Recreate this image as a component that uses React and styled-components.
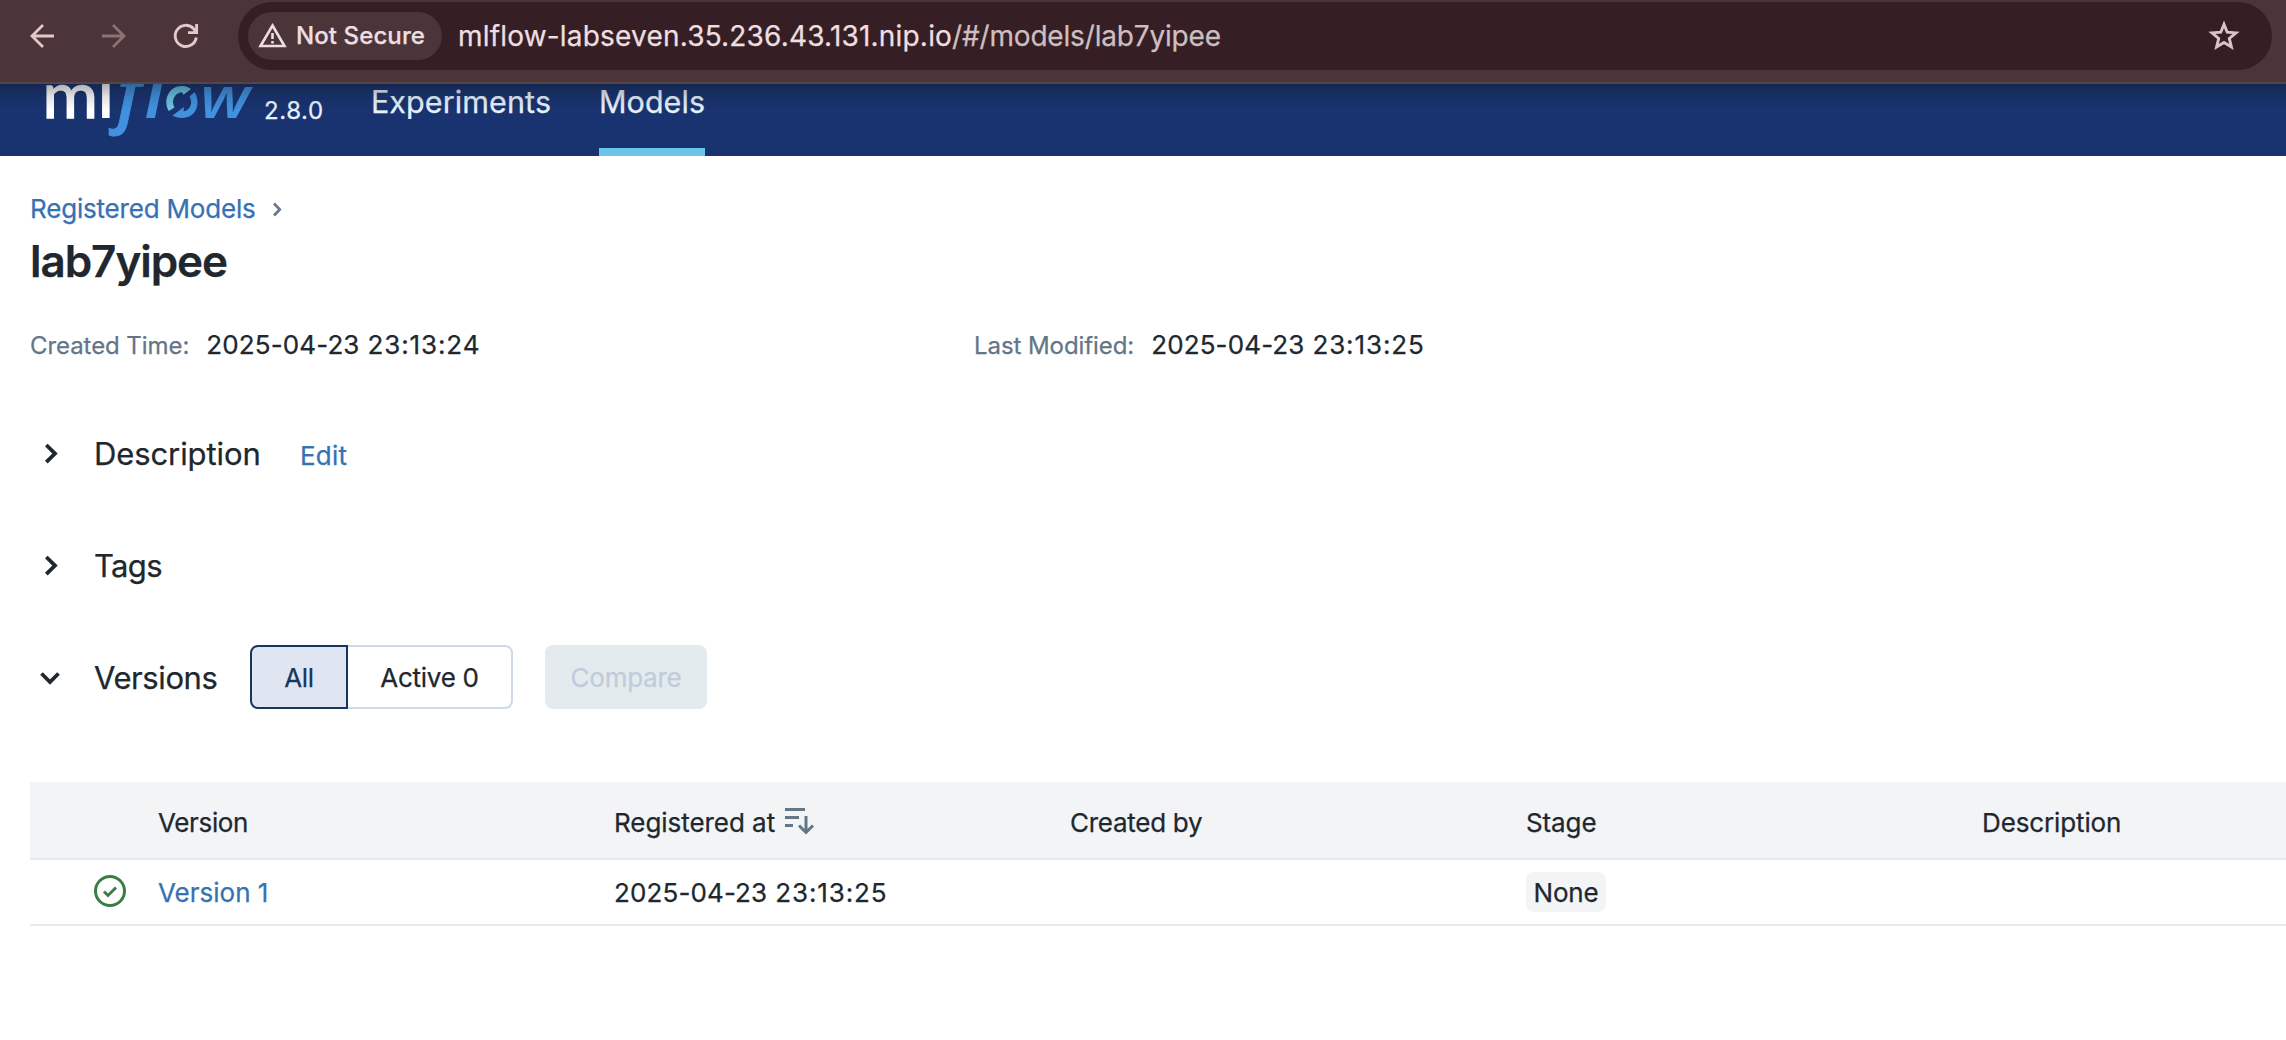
import React from "react";
import styled, { createGlobalStyle } from "styled-components";

const GlobalStyle = createGlobalStyle`
  *, *::before, *::after { box-sizing: border-box; }
  html, body { margin: 0; padding: 0; background: #fff; }
  body {
    overflow: hidden;
    font-family: Inter, "Liberation Sans", sans-serif;
    font-size: 26px;
    color: #20272e;
    -webkit-text-stroke: 0.25px;
  }
  svg { -webkit-text-stroke: 0; }
`;

const Page = styled.div`
  width: 100%;
  height: 1040px;
  overflow: hidden;
  display: flex;
  flex-direction: column;
`;

const Text = styled.span`
  white-space: nowrap;
  letter-spacing: ${(p) => p.$ls || 0}px;
`;

const DateTime = styled.span`
  white-space: nowrap;
  letter-spacing: 0.12px;
  word-spacing: 0.5px;
`;

const Time = styled.span`
  letter-spacing: 0.88px;
`;

/* Browser toolbar */
const Toolbar = styled.div`
  flex: none;
  height: 84px;
  padding: 2px 14px 0 30px;
  display: flex;
  align-items: flex-start;
  background: #4b3538;
  border-bottom: 2px solid #574446;
`;

const NavButtons = styled.div`
  width: 208px;
  height: 68px;
  display: flex;
  align-items: center;
  gap: 48px;
`;

const Omnibox = styled.div`
  flex: 1;
  height: 68px;
  padding: 0 32px 0 10px;
  border-radius: 34px;
  display: flex;
  align-items: center;
  background: #351f24;
`;

const SecurityChip = styled.div`
  width: 194px;
  height: 48px;
  padding: 0 0 1px 10px;
  border-radius: 24px;
  display: flex;
  align-items: center;
  gap: 9px;
  background: #4b3538;
  color: #eddfe0;
  font-size: 24px;
  font-weight: 500;
`;

const Url = styled.div`
  flex: 1;
  margin: -1px 0 0 16px;
  font-size: 28px;
  letter-spacing: -0.18px;
  white-space: nowrap;
  color: #cdbfc1;
`;

const Host = styled.span`
  letter-spacing: 0.19px;
  color: #eddfe0;
`;

/* MLflow header */
const Header = styled.header`
  position: relative;
  flex: none;
  height: 72px;
  padding-left: 40px;
  display: flex;
  align-items: stretch;
  overflow: hidden;
  background: #18336f;
  &::after {
    content: "";
    position: absolute;
    inset: 0 0 auto 0;
    height: 26px;
    background: linear-gradient(rgba(15, 20, 30, 0.34), rgba(15, 20, 30, 0.12) 50%, rgba(15, 20, 30, 0));
  }
`;

const VersionLabel = styled.div`
  width: 107px;
  padding-top: 12px;
  font-size: 24px;
  line-height: 30px;
  letter-spacing: 0.6px;
  color: #e7f1fb;
`;

const Tabs = styled.nav`
  display: flex;
  gap: 48px;
`;

const Tab = styled.a`
  width: ${(p) => p.$w}px;
  display: flex;
  justify-content: center;
  white-space: nowrap;
  font-size: 30.5px;
  line-height: 36px;
  letter-spacing: ${(p) => p.$ls}px;
  color: #e7f1fb;
  border-bottom: 8px solid ${(p) => (p.$active ? "#6bc5e9" : "transparent")};
`;

/* Model page */
const Main = styled.main`
  flex: 1;
  min-width: 0;
  padding: 32px 0 0 30px;
`;

const Breadcrumb = styled.div`
  height: 40px;
  display: flex;
  align-items: center;
  gap: 17px;
`;

const Link = styled.a`
  color: #3671b3;
  white-space: nowrap;
  letter-spacing: ${(p) => p.$ls || 0}px;
`;

const Title = styled.h1`
  margin: 5px 0 36px 0;
  font-size: 44px;
  line-height: 56px;
  font-weight: 600;
  letter-spacing: -1.05px;
`;

const Metadata = styled.div`
  height: 40px;
  display: grid;
  grid-template-columns: 944px 1fr;
`;

const MetaItem = styled.div`
  display: flex;
  align-items: baseline;
  gap: 17px;
  line-height: 40px;
`;

const MetaLabel = styled.span`
  font-size: 24px;
  letter-spacing: -0.07px;
  color: #647587;
`;

const Section = styled.section`
  height: ${(p) => p.$h || 44}px;
  margin-top: ${(p) => p.$mt}px;
  padding-left: 10px;
  display: flex;
  align-items: center;
`;

const SectionHead = styled.div`
  display: flex;
  align-items: baseline;
`;

const SectionTitle = styled.h2`
  width: ${(p) => p.$w}px;
  margin: 0 0 0 32px;
  padding-top: ${(p) => p.$pt || 0}px;
  font-size: 31px;
  line-height: 44px;
  font-weight: 400;
  white-space: nowrap;
  letter-spacing: ${(p) => p.$ls}px;
`;

const ButtonGroup = styled.div`
  display: flex;
`;

const Button = styled.button`
  width: ${(p) => p.$w}px;
  height: 64px;
  padding: 0;
  font: inherit;
  letter-spacing: -0.27px;
  border: 2px solid #cfdae5;
  border-radius: 8px;
  background: #fff;
  color: #20272e;
`;

const AllButton = styled(Button)`
  border-color: #15365f;
  border-radius: 8px 0 0 8px;
  background: #dfe6f1;
  color: #15365f;
`;

const ActiveButton = styled(Button)`
  border-left: 0;
  border-radius: 0 8px 8px 0;
`;

const CompareButton = styled(Button)`
  margin-left: 32px;
  border-color: #e4ebee;
  background: #e4ebee;
  color: #c0ccdb;
`;

const Table = styled.div`
  margin-top: 73px;
`;

const Row = styled.div`
  height: ${(p) => p.$h}px;
  padding-left: 64px;
  display: grid;
  grid-template-columns: 64px repeat(5, 456px);
  align-items: center;
  white-space: nowrap;
  border-bottom: 2px solid #e4ecee;
`;

const HeadRow = styled(Row)`
  padding-top: 5px;
  background: #f3f4f6;
`;

const Cell = styled.div`
  display: flex;
  align-items: center;
  letter-spacing: ${(p) => p.$ls || 0}px;
`;

const StageTag = styled.span`
  width: 80px;
  height: 40px;
  display: flex;
  align-items: center;
  justify-content: center;
  border-radius: 8px;
  background: #f3f4f6;
`;

const Icon = styled.svg`
  display: block;
  flex: none;
  overflow: visible;
  fill: none;
  stroke: currentColor;
  color: ${(p) => p.$color || "#20272e"};
`;

const SortIcon = styled(Icon)`
  margin: -3px 0 0 10px;
`;

const LogoSvg = styled.svg`
  flex: none;
  display: block;
  margin-right: 4px;
`;

function Logo() {
  return (
    <LogoSvg width="220" height="60" viewBox="0 0 220 60">
      <g fill="#fff" fontFamily="Lato, sans-serif" fontSize="61">
        <text x="2.500" y="33.500" stroke="#fff" strokeWidth="1.300" textLength="55.500" lengthAdjust="spacingAndGlyphs">m</text>
        <text x="58.300" y="34" fontWeight="700">l</text>
      </g>
      <g fill="#4191df" fontFamily='"Open Sans", sans-serif' fontStyle="italic" fontWeight="600">
        <text x="77" y="35" fontSize="72" stroke="#4191df" strokeWidth="0.800">f</text>
        <text x="105" y="34" fontSize="60" fontWeight="700">l</text>
        <text x="160" y="34" fontSize="57" textLength="50" lengthAdjust="spacingAndGlyphs">w</text>
      </g>
      <path d="M128.800 27 C122.500 16 129 2 142 2 C146 2 149.500 3.500 151 5 L143.500 10.800 L142 8.200 C134 9 131 17 134.500 23.500 Z" fill="#69c3e3" />
      <path d="M154.500 8 C161 18 157 34 142 34 C138 34 135 33 132.500 31.500 L144 23 L143.500 27.500 C151 26 153 18 149.500 12.500 Z" fill="#4191df" />
    </LogoSvg>
  );
}

function Chevron({ down }) {
  return (
    <Icon width="22" height="22" viewBox="0 0 22 22" strokeWidth="3.8">
      <path d={down ? "M1.500 7.500 L10 16 L18.500 7.500" : "M6.300 2 L15 10.600 L6.300 19.200"} />
    </Icon>
  );
}

function Timestamp({ date, time }) {
  return (
    <DateTime>
      {date} <Time>{time}</Time>
    </DateTime>
  );
}

export default function App() {
  return (
    <Page>
      <GlobalStyle />
      <Toolbar>
        <NavButtons>
          <Icon width="24" height="24" viewBox="0 0 24 24" $color="#e5c6ca" strokeWidth="2.800">
            <path d="M24 12 H2 M13 1 L2 12 L13 23" />
          </Icon>
          <Icon width="24" height="24" viewBox="0 0 24 24" $color="#8b7376" strokeWidth="2.800">
            <path d="M0 12 H22 M11 1 L22 12 L11 23" />
          </Icon>
          <Icon width="24" height="24" viewBox="0 0 24 24" $color="#e5c6ca" strokeWidth="2.900">
            <path d="M22.300 13.500 A10.600 10.600 0 1 1 19.500 4.600 L22.500 8.500 M22.600 0 V8.600 H14" />
          </Icon>
        </NavButtons>
        <Omnibox>
          <SecurityChip>
            <Icon width="29" height="25" viewBox="0 0 29 25" strokeWidth="2.600" $color="#eddfe0">
              <path d="M14.500 2.500 L26.500 23 H2.500 Z M14.500 10 V16 M14.500 18 V20.500" />
            </Icon>
            <Text $ls={0.1}>Not Secure</Text>
          </SecurityChip>
          <Url>
            <Host>mlflow-labseven.35.236.43.131.nip.io</Host>/#/models/lab7yipee
          </Url>
          <Icon width="31" height="30" viewBox="0 0 31 30" strokeWidth="2.900" $color="#d6c6c8">
            <path d="M15 3.300 L18.200 11.200 L27 11.900 L20.300 17.500 L22.400 26 L15 21.500 L7.600 26 L9.700 17.500 L3 11.900 L11.800 11.200 Z" />
          </Icon>
        </Omnibox>
      </Toolbar>

      <Header>
        <Logo />
        <VersionLabel>2.8.0</VersionLabel>
        <Tabs>
          <Tab $w={180} $ls={0.1}>Experiments</Tab>
          <Tab $w={106} $ls={0.05} $active>Models</Tab>
        </Tabs>
      </Header>

      <Main>
        <Breadcrumb>
          <Link $ls={-0.19}>Registered Models</Link>
          <Icon width="12" height="14" viewBox="0 0 12 14" strokeWidth="2.600" $color="#647587">
            <path d="M1 2.500 L6.800 8.500 L1 14.500" />
          </Icon>
        </Breadcrumb>
        <Title>lab7yipee</Title>
        <Metadata>
          <MetaItem>
            <MetaLabel>Created Time:</MetaLabel>
            <Timestamp date="2025-04-23" time="23:13:24" />
          </MetaItem>
          <MetaItem>
            <MetaLabel>Last Modified:</MetaLabel>
            <Timestamp date="2025-04-23" time="23:13:25" />
          </MetaItem>
        </Metadata>

        <Section $mt={67}>
          <Chevron />
          <SectionHead>
            <SectionTitle $w={206} $ls={-0.1}>Description</SectionTitle>
            <Link $ls={0.2}>Edit</Link>
          </SectionHead>
        </Section>
        <Section $mt={68}>
          <Chevron />
          <SectionTitle $ls={-0.65}>Tags</SectionTitle>
        </Section>
        <Section $mt={57} $h={64}>
          <Chevron down />
          <SectionTitle $w={156} $ls={-0.4} $pt={2}>Versions</SectionTitle>
          <ButtonGroup>
            <AllButton $w={98}>All</AllButton>
            <ActiveButton $w={165}>Active 0</ActiveButton>
          </ButtonGroup>
          <CompareButton $w={162} disabled>Compare</CompareButton>
        </Section>

        <Table>
          <HeadRow $h={78}>
            <Cell />
            <Cell $ls={-0.35}>Version</Cell>
            <Cell $ls={-0.05}>
              Registered at
              <SortIcon width="29" height="27" viewBox="0 0 29 27" strokeWidth="3" $color="#647587">
                <path d="M0 1.500 H20 M0 9.500 H14 M0 17.500 H8 M21 8 V24 M14 17.500 L21 24.500 L28 17.500" />
              </SortIcon>
            </Cell>
            <Cell $ls={-0.27}>Created by</Cell>
            <Cell $ls={-0.1}>Stage</Cell>
            <Cell $ls={-0.13}>Description</Cell>
          </HeadRow>
          <Row $h={66}>
            <Cell>
              <Icon width="32" height="32" viewBox="0 0 32 32" strokeWidth="3" $color="#3c7d44">
                <circle cx="16" cy="15" r="14.500" />
                <path d="M10 15.500 L14 19.500 L22 11.500" />
              </Icon>
            </Cell>
            <Cell>
              <Link>Version 1</Link>
            </Cell>
            <Cell>
              <Timestamp date="2025-04-23" time="23:13:25" />
            </Cell>
            <Cell />
            <Cell>
              <StageTag>
                <Text $ls={-0.15}>None</Text>
              </StageTag>
            </Cell>
            <Cell />
          </Row>
        </Table>
      </Main>
    </Page>
  );
}
